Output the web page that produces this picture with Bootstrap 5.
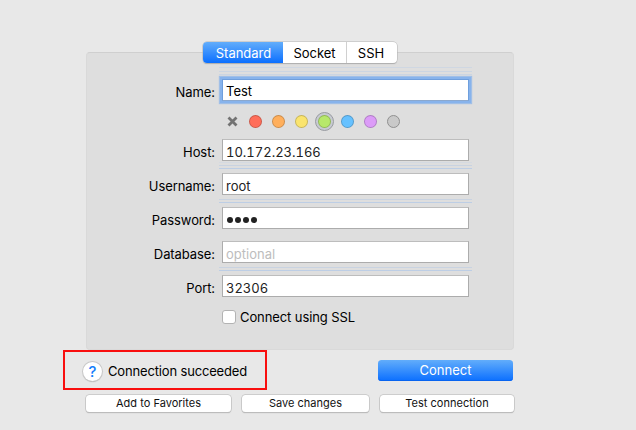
<!DOCTYPE html>
<html lang="en">
<head>
<meta charset="utf-8">
<title>Connection</title>
<link href="https://cdn.jsdelivr.net/npm/bootstrap@5.3.0/dist/css/bootstrap.min.css" rel="stylesheet">
<style>
body{background:#e8e8e8;font-family:Inter,"Liberation Sans",sans-serif;font-size:13px;line-height:16px;color:#000;width:636px;height:430px;overflow:hidden}
.panel{width:428px;height:298px;margin:52px 0 0 86px;background:#dedede;border:1px solid #d9d9d9;border-top-color:#cfcfcf;border-radius:4px}
.tabs{width:194px;height:21px;margin:-11px 0 0 116px;border-radius:4px;background:#fff;box-shadow:0 0 0 .5px #b4b4b4,0 1px 1px #aaa;overflow:hidden}
.tabs .nav-link{padding:2px 0 0;color:#000;border-radius:0;height:21px;line-height:19px;text-align:center}
.tabs .nav-link.active{background:linear-gradient(#62adfb,#0b6fff);color:#fff;width:80px;padding-left:1px}
.tab-socket{width:64px;border-right:1px solid #d0d0d0!important}
.tabs .tab-ssh{width:50px;padding-right:2px}
.lines{height:12px;margin-left:132px;width:253px}
.l0{height:16px;background:linear-gradient(#cfd7e2,#cfd7e2) 0 4px/100% 1px no-repeat,linear-gradient(#cbd5e2,#cbd5e2) 0 8px/100% 1px no-repeat,linear-gradient(#cbd5e2,#cbd5e2) 0 11px/100% 1px no-repeat}
.l1{background:linear-gradient(#d5dae1,#d5dae1) 0 1px/100% 1px no-repeat,linear-gradient(#c9d3e1,#c9d3e1) 0 4px/100% 1px no-repeat,linear-gradient(#bdcee5,#bdcee5) 0 7px/100% 1px no-repeat}
.l2{background:linear-gradient(#c9d3e1,#c9d3e1) 0 4px/100% 1px no-repeat,linear-gradient(#bdcee5,#bdcee5) 0 7px/100% 1px no-repeat}
.row-field{height:22px}
.row-field label{width:128px;margin-right:7px;text-align:right;padding-top:5px;white-space:nowrap;letter-spacing:-.08px}
.field.form-control{width:247px;height:22px;border:1px solid #acacac;border-top-color:#bdbdbd;border-radius:0;padding:4px 0 0 3px;font-size:13px;line-height:16px;color:#222;background:#fff;white-space:nowrap;min-height:0}
.field.digits{font-feature-settings:"tnum"}
.focused.form-control{border-color:#6f9fdd;border-bottom-color:#8ba8ce;box-shadow:0 0 0 2px #87b3ec,0 0 1px 3px #a0bfe7;padding-top:3px;color:#000}
.field.muted-text{color:#bdbdbd}
.swatches{height:38px;padding:11px 0 0 139px}
.dot{width:13px;height:13px;border:1px solid #0003;border-radius:50%;margin-right:10px;margin-top:3px}
.ring{width:19px;height:19px;border:1px solid #999ba1;border-radius:50%;background:#c7cad2;margin:0 7px 0 -3px;padding:2px}
.ring .dot{margin:0}
.ssl{padding-left:135px;letter-spacing:-.09px}
.check{width:14px;height:14px;border:1px solid #b3b3b3;border-radius:3px;background:#fff;margin-right:4px}
.status{width:204px;height:40px;margin-left:63px;border:2px solid #f90f0f;padding:2px 0 0 18px;letter-spacing:-.16px}
.help{width:19px;height:19px;border-radius:50%;background:#fff;box-shadow:0 0 0 1px #c8c8c8,0 1px 1px #999;color:#147efb;font-size:15px;font-weight:500;line-height:19px;text-align:center;margin-right:6px}
.go.btn{width:135px;height:21px;margin:0 0 0 111px;padding:0;border:0;border-radius:3.5px;background:linear-gradient(#62adfb,#0b6fff);color:#fff;font-size:13px;line-height:20px;box-shadow:inset 0 -1px #0864f0}
.actions{padding:5px 0 0 86px;gap:11px}
.small-btn.btn{height:17px;padding:0;border:0;border-radius:3.5px;background:#fff;color:#111;font-size:11px;line-height:17px;letter-spacing:.02px;box-shadow:0 0 0 .8px #c3c3c3,0 1px 1px #a0a0a0}
.w-add{width:145px}.w-save{width:127px}.w-test{width:134px}
</style>
<script src="https://cdn.jsdelivr.net/npm/bootstrap@5.3.0/dist/js/bootstrap.bundle.min.js"></script>
</head>
<body class="d-flex flex-column">
<section class="panel flex-shrink-0">
  <nav class="nav tabs d-flex flex-nowrap">
    <a class="nav-link active">Standard</a>
    <a class="nav-link tab-socket">Socket</a>
    <a class="nav-link tab-ssh">SSH</a>
  </nav>
  <div class="lines l0"></div>
  <div class="row-field d-flex"><label>Name:</label><div class="form-control field focused">Test</div></div>
  <div class="swatches d-flex align-items-start">
    <svg class="dot border-0 rounded-0" viewBox="0 0 13 13"><path d="M2.5 2.5l8 8m0-8l-8 8" stroke="#737373" stroke-width="2.8"/></svg>
    <span class="dot" style="background:#ff6e5a"></span>
    <span class="dot" style="background:#ffaf5c"></span>
    <span class="dot" style="background:#fae46e"></span>
    <span class="ring"><span class="dot d-block" style="background:#b7e86b"></span></span>
    <span class="dot" style="background:#66c1ff"></span>
    <span class="dot" style="background:#dc9cf8"></span>
    <span class="dot" style="background:#c9c9c9;border-color:#909090"></span>
  </div>
  <div class="row-field d-flex"><label>Host:</label><div class="form-control field digits">10.172.23.166</div></div>
  <div class="lines l1"></div>
  <div class="row-field d-flex"><label>Username:</label><div class="form-control field">root</div></div>
  <div class="lines l2"></div>
  <div class="row-field d-flex"><label>Password:</label><div class="form-control field"><svg width="34" height="16" class="d-block" fill="#222"><circle cx="4" cy="8" r="3"/><circle cx="12" cy="8" r="3"/><circle cx="20" cy="8" r="3"/><circle cx="28" cy="8" r="3"/></svg></div></div>
  <div class="lines"></div>
  <div class="row-field d-flex"><label>Database:</label><div class="form-control field muted-text">optional</div></div>
  <div class="lines l2"></div>
  <div class="row-field d-flex"><label>Port:</label><div class="form-control field digits">32306</div></div>
  <div class="lines"></div>
  <div class="d-flex align-items-center ssl"><span class="check"></span><span>Connect using SSL</span></div>
</section>
<div class="d-flex align-items-center flex-shrink-0">
  <div class="status d-flex align-items-center"><span class="help">?</span><span>Connection succeeded</span></div>
  <button class="btn go">Connect</button>
</div>
<div class="d-flex flex-shrink-0 actions">
  <button class="btn small-btn w-add">Add to Favorites</button>
  <button class="btn small-btn w-save">Save changes</button>
  <button class="btn small-btn w-test">Test connection</button>
</div>
</body>
</html>
